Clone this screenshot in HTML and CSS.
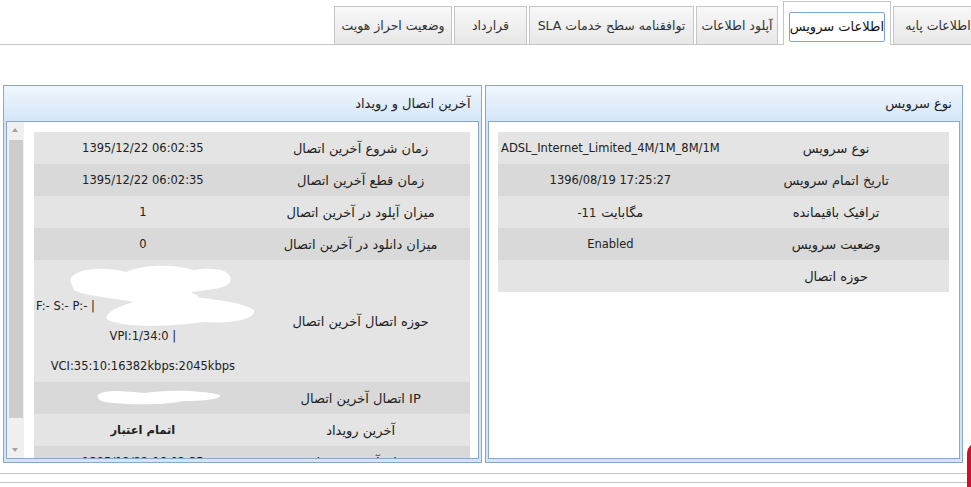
FILE: index.html
```html
<!DOCTYPE html>
<html lang="fa" dir="rtl">
<head>
    <meta charset="UTF-8">
    <meta name="viewport" content="width=device-width, initial-scale=1.0">
    <title>اطلاعات سرویس</title>
    <link rel="stylesheet" href="styles.css">
</head>
<body>
    <ul class="tabs">
        <li class="tab tab-basic">اطلاعات پایه</li>
        <li class="tab tab-service active"><span class="focus">اطلاعات سرویس</span></li>
        <li class="tab tab-upload">آپلود اطلاعات</li>
        <li class="tab tab-sla">توافقنامه سطح خدمات SLA</li>
        <li class="tab tab-contract">قرارداد</li>
        <li class="tab tab-auth">وضعیت احراز هویت</li>
    </ul>

    <div class="panels">
        <div class="panel">
            <div class="panel-head">نوع سرویس</div>
            <div class="panel-body service-body">
                <table class="info">
                    <tr><td class="label">نوع سرویس</td><td class="value">ADSL_Internet_Limited_4M/1M_8M/1M</td></tr>
                    <tr><td class="label">تاریخ اتمام سرویس</td><td class="value">1396/08/19 17:25:27</td></tr>
                    <tr>
                        <td class="label">ترافیک باقیمانده</td>
                        <td class="value"><span class="amount"><span>-11</span><span class="fa">مگابایت</span></span></td>
                    </tr>
                    <tr><td class="label">وضعیت سرویس</td><td class="value">Enabled</td></tr>
                    <tr><td class="label">حوزه اتصال</td><td class="value"></td></tr>
                </table>
            </div>
        </div>

        <div class="panel">
            <div class="panel-head">آخرین اتصال و رویداد</div>
            <div class="panel-body conn-body">
                <div class="scroll-content">
                    <table class="info">
                        <tr><td class="label">زمان شروع آخرین اتصال</td><td class="value">1395/12/22 06:02:35</td></tr>
                        <tr><td class="label">زمان قطع آخرین اتصال</td><td class="value">1395/12/22 06:02:35</td></tr>
                        <tr><td class="label">میزان آپلود در آخرین اتصال</td><td class="value">1</td></tr>
                        <tr><td class="label">میزان دانلود در آخرین اتصال</td><td class="value">0</td></tr>
                        <tr class="tall">
                            <td class="label">حوزه اتصال آخرین اتصال</td>
                            <td class="value multi">
                                <div class="line">&nbsp;</div>
                                <div class="line first">F:- S:- P:- |</div>
                                <div class="line">VPI:1/34:0 |</div>
                                <div class="line">VCI:35:10:16382kbps:2045kbps</div>
                                <svg class="redact" width="221" height="70" viewBox="0 0 221 70">
                                    <path d="M36 18 C40 6 70 4 92 10 C110 2 140 2 160 8 C185 4 200 10 196 20 C190 30 160 26 150 34 C170 36 210 40 220 48 C222 58 196 62 170 60 C140 64 100 66 80 60 C60 56 84 44 100 40 C80 36 50 34 40 28 Z" fill="#fff"/>
                                    <path d="M60 20 C90 26 120 22 150 30 M100 44 C120 30 140 28 160 36" stroke="#fff" stroke-width="8" fill="none" stroke-linecap="round"/>
                                </svg>
                            </td>
                        </tr>
                        <tr>
                            <td class="label">IP اتصال آخرین اتصال</td>
                            <td class="value ip">
                                <svg class="redact ip-redact" width="130" height="20" viewBox="0 0 130 20">
                                    <path d="M4 8 C10 2 30 4 50 6 C80 2 110 4 126 8 C128 12 110 14 90 14 C70 18 40 18 20 16 C8 16 2 12 4 8 Z" fill="#fff"/>
                                </svg>
                            </td>
                        </tr>
                        <tr><td class="label">آخرین رویداد</td><td class="value"><b>اتمام اعتبار</b></td></tr>
                        <tr><td class="label">زمان آخرین رویداد</td><td class="value">1395/12/22 06:02:35</td></tr>
                    </table>
                </div>
                <div class="scrollbar">
                    <div class="sb-btn up"></div>
                    <div class="sb-track"><div class="sb-thumb"></div></div>
                    <div class="sb-btn down"></div>
                </div>
            </div>
        </div>
    </div>

    <div class="footer"></div>
    <div class="support-tab"></div>
</body>
</html>
```

FILE: styles.css
```css
* {
    box-sizing: border-box;
}

body {
    margin: 0;
    font-family: "DejaVu Sans", "Liberation Sans", sans-serif;
    font-size: 11.5px;
    color: #222;
    background: #fff;
    height: 487px;
    overflow: hidden;
    position: relative;
}

/* tabs */
.tabs {
    list-style: none;
    margin: 0 -12px 0 0;
    padding: 0;
    height: 45px;
    display: flex;
    align-items: flex-end;
    gap: 2px;
    border-bottom: 1px solid #c4c4c4;
}

.tab {
    height: 38px;
    line-height: 37px;
    padding: 0;
    text-align: center;
    font-size: 12.5px;
    color: #333;
    white-space: nowrap;
    background: linear-gradient(#f8f8f8, #e7e7e7);
    border: 1px solid #c6c6c6;
    border-bottom: none;
}

.tab-basic { width: 90px; }
.tab-service { width: 108px; }
.tab-upload { width: 82px; }
.tab-sla { width: 165px; }
.tab-contract { width: 73px; }
.tab-auth { width: 118px; }

.tab.active {
    height: 44px;
    margin-bottom: -1px;
    margin-left: 3px;
    padding: 10px 5px 3px;
    background: #fff;
    line-height: normal;
    position: relative;
}

.tab.active .focus {
    display: block;
    height: 30px;
    line-height: 28px;
    color: #111;
    font-size: 13px;
    border: 1px solid #7ea4d4;
    border-radius: 2px;
}

/* panels */
.panels {
    display: flex;
    gap: 3px;
    padding: 0 8px 0 3px;
    margin-top: 40px;
}

.panel {
    flex: 1 1 0;
    height: 378px;
    border: 1px solid #8aa8c6;
    background: #d3e4f6;
    padding: 0 2px 3px;
}

.panel-head {
    height: 35px;
    line-height: 35px;
    margin: 0 -2px;
    padding-right: 10px;
    font-size: 13px;
    color: #222;
    background: linear-gradient(#f0f6fd, #d5e6f8);
}

.panel-body {
    height: 338px;
    border: 1px solid #8aa8c6;
    background: #fff;
    overflow: hidden;
}

.service-body {
    padding: 10px 10px 0 9px;
}

.conn-body {
    display: flex;
}

.scroll-content {
    flex: 1;
    padding: 10px 8px 0 10px;
    overflow: hidden;
}

/* info tables */
.info {
    width: 100%;
    border-collapse: collapse;
}

.info td {
    height: 32px;
    padding: 0;
    text-align: center;
    vertical-align: middle;
}

.info tr:nth-child(odd) td {
    background: #e4e4e4;
}

.info tr:nth-child(even) td {
    background: #d9d9d9;
}

.info .label {
    width: 50%;
    font-size: 13px;
}

.info .value {
    direction: ltr;
    position: relative;
}

.amount {
    display: inline-flex;
    direction: ltr;
    align-items: baseline;
    gap: 5px;
}

.info .value .fa {
    font-size: 13px;
}

.info .multi {
    padding: 1px 0;
    line-height: 30px;
}

.multi .line.first {
    text-align: left;
    padding-left: 2px;
}

.redact {
    position: absolute;
    left: 0;
    top: 2px;
}

.ip-redact {
    left: 60px;
    top: 5px;
}

/* fake scrollbar */
.scrollbar {
    width: 17px;
    display: flex;
    flex-direction: column;
    background: #f0f0f0;
}

.sb-btn {
    height: 17px;
    position: relative;
}

.sb-btn::after {
    content: "";
    position: absolute;
    left: 5px;
    top: 6px;
    border-left: 3.5px solid transparent;
    border-right: 3.5px solid transparent;
}

.sb-btn.up::after {
    border-bottom: 4px solid #a3a3a3;
}

.sb-btn.down::after {
    top: 7px;
    border-top: 4px solid #a3a3a3;
}

.sb-track {
    flex: 1;
    padding: 1px 1px 0 2px;
}

.sb-thumb {
    height: 278px;
    background: #cdcdcd;
}

.footer {
    margin-top: 10px;
    height: 10px;
    border-top: 1px solid #c4c4c4;
    border-bottom: 1px solid #c4c4c4;
}

.support-tab {
    position: absolute;
    top: 443px;
    left: 967px;
    width: 30px;
    height: 60px;
    background: #d0102a;
    border-radius: 10px 0 0 10px;
}
```
